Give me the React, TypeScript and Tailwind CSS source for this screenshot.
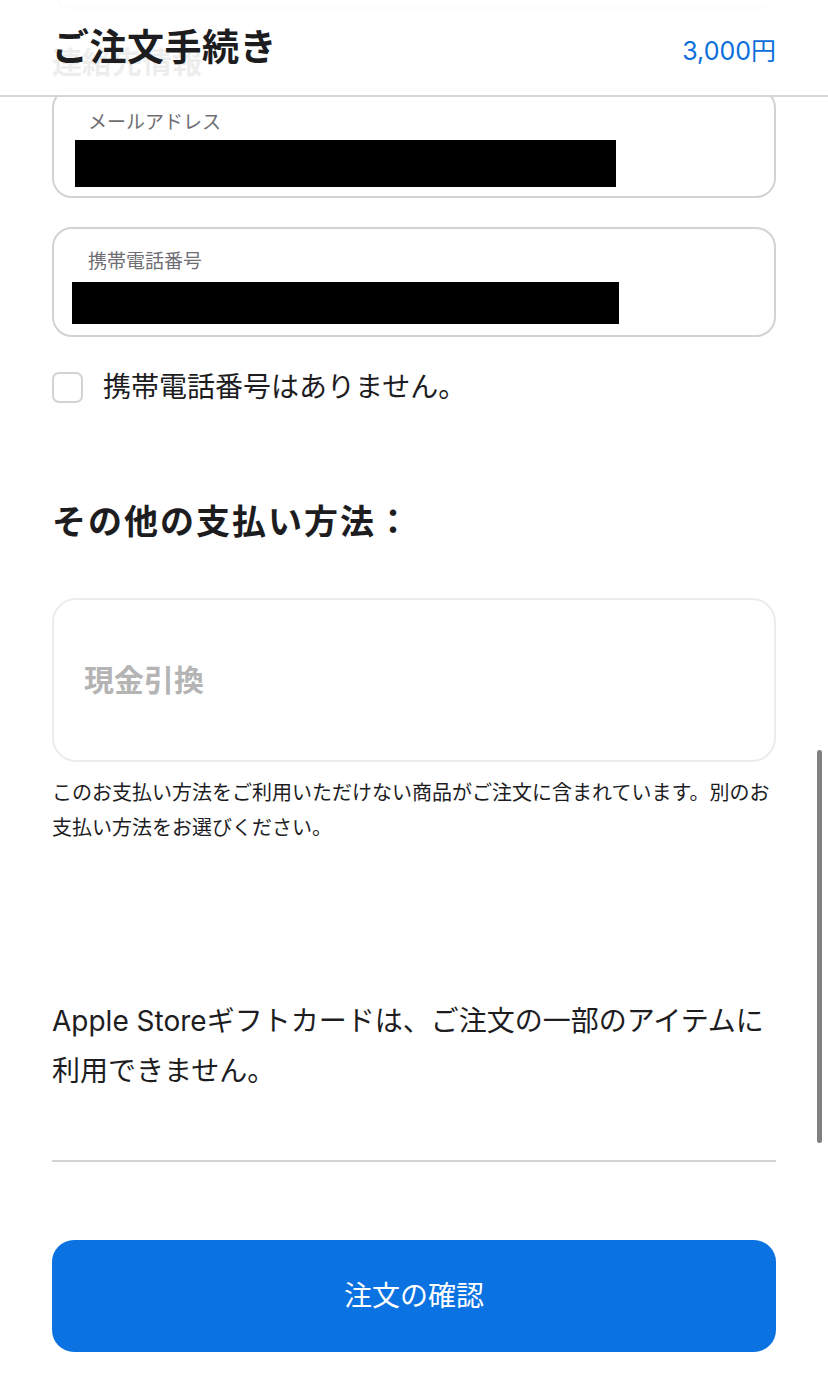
import React from 'react';

const font = { fontFamily: 'Inter, "Noto Sans CJK JP", sans-serif' };

const Field = ({ label, boxLeft, boxTop, boxWidth, boxHeight }: {
  label: string;
  boxLeft: string;
  boxTop: string;
  boxWidth: string;
  boxHeight: string;
}) => (
  <div className="h-[110px] rounded-[20px] border-2 border-[#d2d2d7] bg-white px-[34px] pt-[20px]">
    <div className="text-[19px] leading-[26px] text-[#6e6e73]">{label}</div>
    {/* redacted value */}
    <div className={`bg-black ${boxLeft} ${boxTop} ${boxWidth} ${boxHeight}`} />
  </div>
);

export default function App() {
  return (
    <div className="relative min-h-[1393px] w-full overflow-hidden bg-white text-[#1d1d1f]" style={font}>
      {/* sticky header over the scrolled content */}
      <div className="absolute inset-x-0 top-0 z-10 flex h-[97px] items-center justify-between border-b-2 border-[#d6d6d6] bg-white/[0.92] px-[52px]">
        <h1 className="text-[37px] font-semibold leading-none tracking-[0.5px]">ご注文手続き</h1>
        <span className="mt-[8px] text-[25px] leading-none text-[#0a6fdb]">3,000円</span>
      </div>

      {/* scrollbar */}
      <div className="absolute right-[6px] top-[750px] h-[393px] w-[5px] rounded-full bg-[#808080]" />

      <div className="px-[52px]">
        {/* end of previous card */}
        <div className="mx-[6px] h-[9px] rounded-b-[20px] border-2 border-t-0 border-[#d2d2d7]" />

        <h2 className="mt-[35px] text-[30px] font-bold leading-[36px]">連絡先情報</h2>

        <div className="mt-[8px]">
          <Field label="メールアドレス" boxLeft="ml-[-13px]" boxTop="mt-[4px]" boxWidth="w-[541px]" boxHeight="h-[47px]" />
        </div>
        <div className="mt-[29px]">
          <Field label="携帯電話番号" boxLeft="ml-[-16px]" boxTop="mt-[7px]" boxWidth="w-[547px]" boxHeight="h-[42px]" />
        </div>

        <label className="mt-[35px] flex items-center gap-[20px]">
          <span className="h-[31px] w-[31px] rounded-[7px] border-2 border-[#d2d2d7] bg-white" />
          <span className="text-[28px] leading-[31px]">携帯電話番号はありません。</span>
        </label>

        <h2 className="mt-[99px] text-[34px] font-bold leading-[40px] tracking-[2px]">その他の支払い方法：</h2>

        <div className="mt-[56px] flex h-[164px] items-center rounded-[24px] border-2 border-[#ececec] px-[30px]">
          <span className="text-[30px] font-bold text-[#b4b4b4]">現金引換</span>
        </div>

        <p className="mt-[14px] text-[20px] leading-[35px]">
          このお支払い方法をご利用いただけない商品がご注文に含まれています。別のお支払い方法をお選びください。
        </p>

        <p className="mt-[150px] text-[28px] leading-[50px]">
          Apple Storeギフトカードは、ご注文の一部のアイテムに
          <br />
          利用できません。
        </p>

        <div className="mt-[64px] h-[2px] bg-[#d2d2d7]" />

        <button className="mt-[78px] flex h-[112px] w-full items-center justify-center rounded-[22px] bg-[#0b72e2] text-[28px] text-white">
          注文の確認
        </button>
      </div>
    </div>
  );
}
